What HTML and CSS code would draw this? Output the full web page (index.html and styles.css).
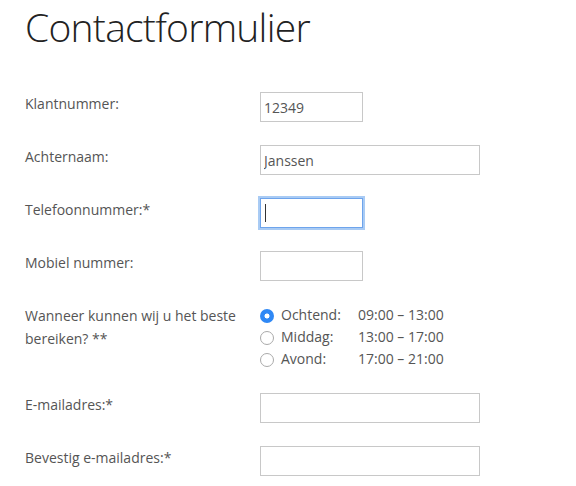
FILE: index.html
```html
<!DOCTYPE html>
<html lang="nl">
<head>
<meta charset="utf-8">
<title>Contactformulier</title>
<link rel="stylesheet" href="styles.css">
</head>
<body>
<div class="page">
  <h1 class="title">Contactformulier</h1>
  <form class="form">
    <label class="label" for="klant">Klantnummer:</label>
    <div class="field"><input id="klant" class="input short" type="text" value="12349"></div>

    <label class="label" for="naam">Achternaam:</label>
    <div class="field"><input id="naam" class="input long" type="text" value="Janssen"></div>

    <label class="label" for="tel">Telefoonnummer:*</label>
    <div class="field"><span class="focus-wrap"><input id="tel" class="input short focused" type="text"><span class="caret"></span></span></div>

    <label class="label" for="mob">Mobiel nummer:</label>
    <div class="field"><input id="mob" class="input short" type="text"></div>

    <div class="label multi">Wanneer kunnen wij u het beste bereiken? **</div>
    <div class="field radios">
      <label class="radio-row"><input class="radio" type="radio" name="tijd" checked><span class="part">Ochtend:</span><span class="time">09:00 – 13:00</span></label>
      <label class="radio-row"><input class="radio" type="radio" name="tijd"><span class="part">Middag:</span><span class="time">13:00 – 17:00</span></label>
      <label class="radio-row"><input class="radio" type="radio" name="tijd"><span class="part">Avond:</span><span class="time">17:00 – 21:00</span></label>
    </div>

    <label class="label" for="mail">E-mailadres:*</label>
    <div class="field"><input id="mail" class="input long" type="text"></div>

    <label class="label" for="mail2">Bevestig e-mailadres:*</label>
    <div class="field"><input id="mail2" class="input long" type="text"></div>
  </form>
</div>
</body>
</html>
```
FILE: styles.css
```css
html, body {
  margin: 0;
  padding: 0;
  background: #fff;
}
body {
  font-family: "Open Sans", "DejaVu Sans", sans-serif;
  color: #555;
  font-size: 14px;
}
.page {
  padding: 0 25px;
}
.title {
  margin: 3px 0 0;
  font-size: 39px;
  line-height: 48px;
  font-weight: 300;
  color: #222;
  letter-spacing: -0.75px;
}
.form {
  margin-top: 41px;
  display: grid;
  grid-template-columns: 235px 1fr;
  row-gap: 23px;
}
.label {
  line-height: 23px;
  color: #555;
}
.field {
  min-height: 30px;
}
.input {
  box-sizing: border-box;
  height: 30px;
  border: 1px solid #c8c8c8;
  padding: 0 3px;
  font-family: "Open Sans", "DejaVu Sans", sans-serif;
  font-size: 14px;
  color: #555;
  background: #fff;
  outline: none;
  display: block;
}
.short { width: 103px; }
.long { width: 220px; }
.focus-wrap {
  position: relative;
  display: inline-block;
}
.focused {
  border: 1px solid #6ea4ec;
  box-shadow: 0 0 0 2px #a9cbf4;
}
.caret {
  position: absolute;
  left: 5px;
  top: 6px;
  width: 1px;
  height: 18px;
  background: #333;
}
.radios {
  display: flex;
  flex-direction: column;
}
.radio-row {
  display: flex;
  align-items: center;
  line-height: 22px;
  height: 22px;
}
.radio {
  appearance: none;
  -webkit-appearance: none;
  margin: 0 7px 0 0;
  width: 14px;
  height: 14px;
  border-radius: 50%;
  border: 1px solid #aaa;
  background: #fff;
  box-sizing: border-box;
  position: relative;
  top: 1px;
}
.radio:checked {
  border: none;
  background: radial-gradient(circle, #fff 0 2.2px, #2f88f5 2.8px);
}
.part {
  width: 77px;
}
.time {
  color: #555;
}
```
